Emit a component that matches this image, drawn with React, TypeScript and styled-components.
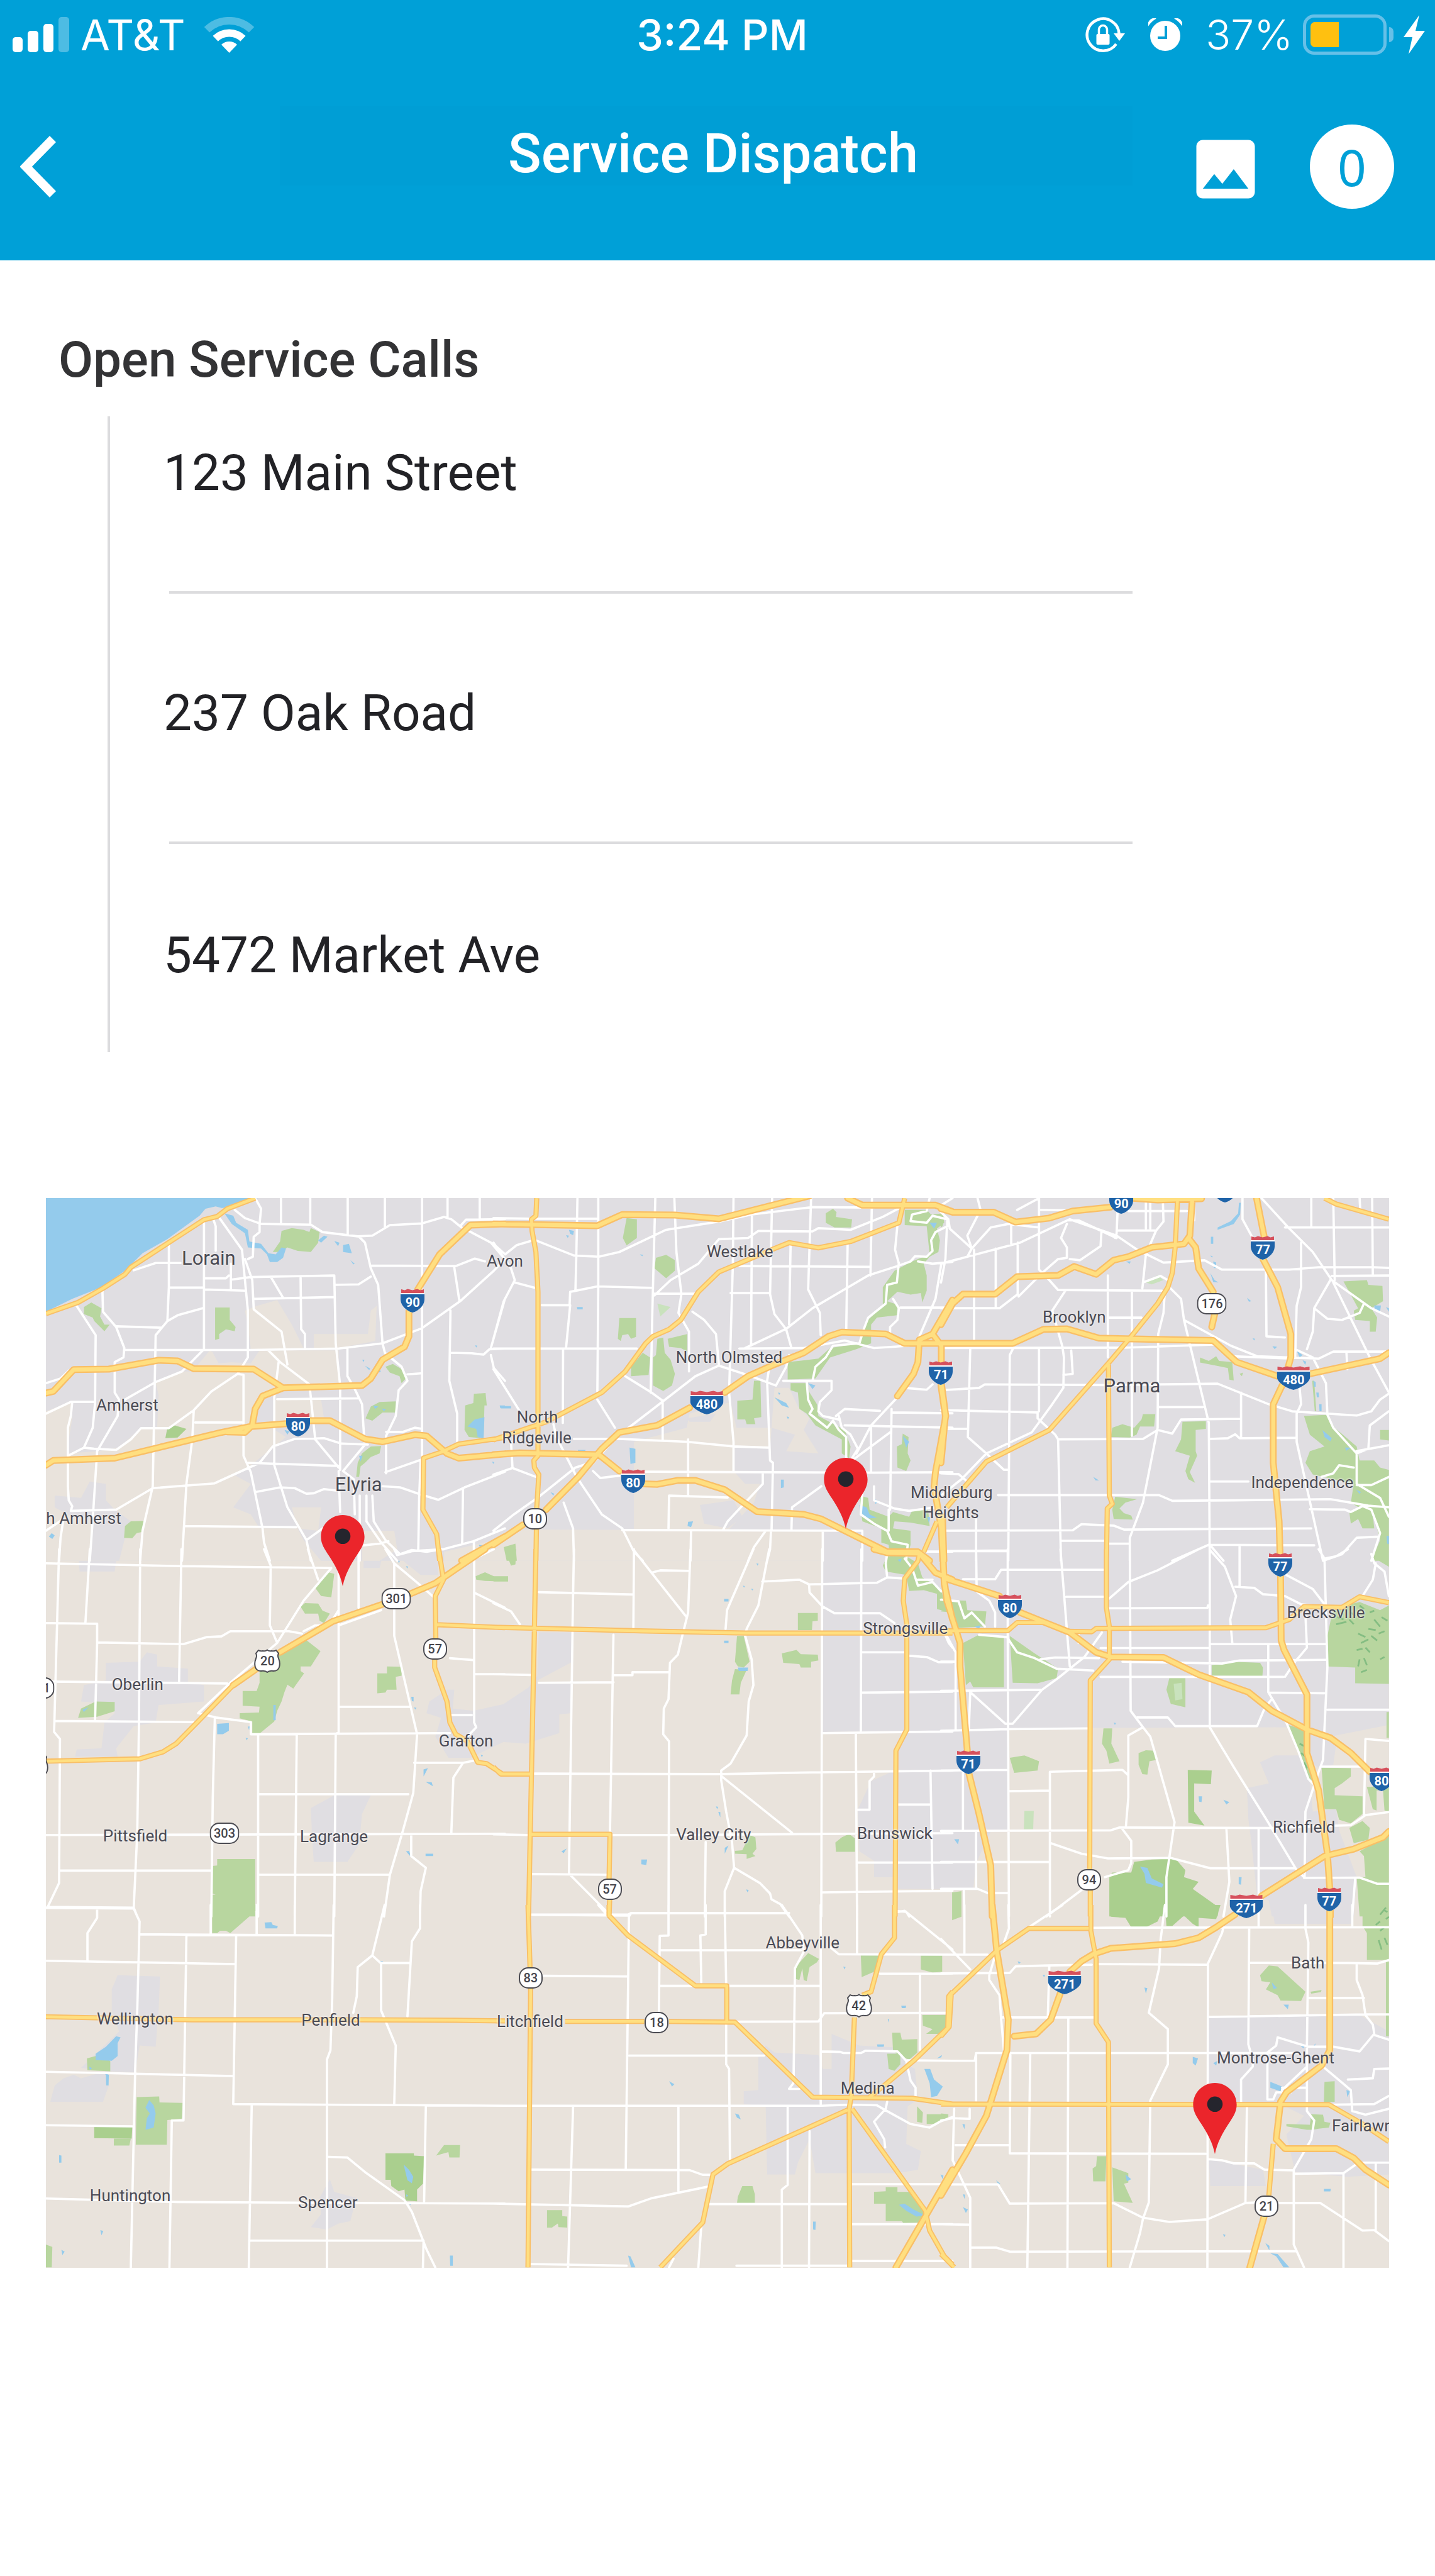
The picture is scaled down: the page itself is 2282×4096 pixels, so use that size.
import React from "react";
import styled, { createGlobalStyle, css } from "styled-components";
import { MdImage } from "react-icons/md";

const colors = {
  brand: "#00a0d7",
  brandDeep: "#009ed5",
  ink: "#222226",
  heading: "#333335",
  rule: "#dcdcde",
  land: "#e9e3dc",
  urban: "#e0dee2",
  park: "#b8d69f",
  forest: "#aacf8e",
  meadow: "#c9e2bd",
  water: "#94cbec",
  roadEdge: "#f9bf66",
  road: "#ffdf80",
  label: "#4b4b55",
};

const GlobalStyle = createGlobalStyle`
  *, *::before, *::after { box-sizing: border-box; }
  body { margin: 0; background: #fff; font-family: Roboto, "Liberation Sans", sans-serif; }
  button { font: inherit; color: inherit; background: none; border: 0; padding: 0; cursor: pointer; }
`;

const Page = styled.div`
  min-height: 100vh;
  background: #fff;
`;

const Header = styled.header`
  background: ${colors.brand};
  color: #fff;
`;

const StatusBar = styled.div`
  display: grid;
  grid-template-columns: 996fr auto 985fr;
  align-items: center;
  height: 108px;
  padding: 2px 16px 0 20px;
  font-family: Inter, "Liberation Sans", sans-serif;
  font-size: 66px;
  line-height: 84px;
`;

const StatusGroup = styled.div<{ $end?: boolean; $gap: number }>`
  display: flex;
  align-items: center;
  gap: ${(p) => p.$gap}px;
  justify-content: ${(p) => (p.$end ? "flex-end" : "flex-start")};
  font-weight: 300;
  svg { flex: none; display: block; }
`;

const Carrier = styled.span`
  font-size: 68px;
  font-weight: 400;
  padding-right: 12px;
`;

const Clock = styled.time`
  font-size: 68px;
  font-weight: 500;
`;

const PowerGroup = styled.div`
  display: flex;
  align-items: center;
  gap: 16px;
`;

const BatteryShell = styled.span`
  display: flex;
  width: 133px;
  height: 64px;
  padding: 7px;
  border: 5px solid #66c0e8;
  border-radius: 18px;
`;

const BatteryCharge = styled.span`
  width: 45px;
  background: #ffc010;
  border-radius: 7px 0 0 7px;
`;

const BatteryRow = styled.span`
  display: flex;
  align-items: center;
  gap: 4px;
  &::after {
    content: "";
    width: 7px;
    height: 24px;
    background: #66c0e8;
    border-radius: 0 7px 7px 0;
  }
`;

const NavBar = styled.nav`
  display: grid;
  grid-template-columns: 445px 1fr 481px;
  align-items: center;
  height: 306px;
  padding-top: 8px;
`;

const Title = styled.h1`
  align-self: start;
  margin: 53px 0 0;
  padding: 24px 0 0 22px;
  background: ${colors.brandDeep};
  font-size: 87px;
  line-height: 102px;
  font-weight: 500;
  text-align: center;
`;

const BackButton = styled.button`
  justify-self: start;
  padding-left: 32px;
  svg { display: block; }
`;

const NavActions = styled.div`
  display: flex;
  align-items: center;
  justify-content: flex-end;
  gap: 72px;
  padding-right: 65px;
`;

const ImageButton = styled.button`
  margin-top: 8px;
  font-size: 124px;
  svg { display: block; }
`;

const CountButton = styled.button`
  width: 134px;
  height: 134px;
  border-radius: 50%;
  background: #fff;
  color: ${colors.brand};
  font-family: "Noto Sans", sans-serif;
  font-size: 80px;
  line-height: 134px;
`;

const Main = styled.main`
  padding: 102px 73px 0;
`;

const SectionTitle = styled.h2`
  margin: 0 0 0 20px;
  color: ${colors.heading};
  font-size: 80px;
  line-height: 112px;
  font-weight: 500;
`;

const CallList = styled.ul`
  list-style: none;
  margin: 34px 408px 0 98px;
  padding: 0 0 0 84px;
  border-left: 4px solid ${colors.rule};
`;

const rowPadding = {
  first: "42px 0 140px",
  middle: "142px 0 156px",
  last: "129px 0 106px",
};

const CallRow = styled.li<{ $place: keyof typeof rowPadding }>`
  padding: ${(p) => rowPadding[p.$place]};
  color: ${colors.ink};
  font-size: 80px;
  line-height: 96px;
  margin-left: 10px;
  text-indent: -9px;
  ${(p) => p.$place !== "last" && css`border-bottom: 4px solid ${colors.rule};`}
`;

const MapFrame = styled.section`
  position: relative;
  overflow: hidden;
  margin-top: 232px;
  aspect-ratio: 2341 / 1864;
  background: ${colors.land};
`;

const MapDrawing = styled.svg`
  display: block;
  width: 100%;
  height: 100%;
`;

const MapSpot = styled.span`
  position: absolute;
  transform: translate(-50%, -50%);
`;

const PlaceName = styled(MapSpot)<{ $large?: boolean }>`
  color: ${colors.label};
  font-size: ${(p) => (p.$large ? 31 : 26)}px;
  line-height: 34px;
  white-space: nowrap;
  text-shadow: 0 0 3px #f4f2f0, 0 0 3px #f4f2f0;
`;

const Shield = styled(MapSpot)<{ $kind: ShieldKind; $wide: boolean }>`
  display: grid;
  place-items: center;
  width: ${(p) => (p.$kind === "us" ? 42 : p.$wide ? (p.$kind === "state" ? 47 : 53) : 38)}px;
  height: ${(p) => (p.$kind === "state" ? 34 : 38)}px;
  font-size: 20px;
  line-height: 24px;
  color: ${(p) => (p.$kind === "interstate" ? "#fff" : "#44444c")};
  font-weight: ${(p) => (p.$kind === "interstate" ? 700 : 500)};
  ${(p) => p.$kind === "interstate" && css`padding-top: 6px;`}
  svg { position: absolute; inset: 0; width: 100%; height: 100%; }
  span { position: relative; }
`;

const Pin = styled.button`
  position: absolute;
  width: 70px;
  height: 113px;
  transform: translate(-50%, -100%);
  svg { display: block; width: 100%; height: 100%; }
`;

/* ---- Map data ----
   The area is surveyed on nine sheets, A B C / D E F / G H I.
   Points are in sheet units and get projected onto the 2341 x 1864 map. */

type SheetId = "A" | "B" | "C" | "D" | "E" | "F" | "G" | "H" | "I";
type ShieldKind = "interstate" | "us" | "state";

const MAP_W = 2341;
const MAP_H = 1864;
const SHEET_IDS: SheetId[] = ["A", "B", "C", "D", "E", "F", "G", "H", "I"];

const project = (id: SheetId, x: number, y: number): [number, number] => {
  const i = SHEET_IDS.indexOf(id);
  return [(i % 3) * 780 + (x * 800) / 1568, Math.floor(i / 3) * 620 - 8 + (y * 640) / 1568];
};

const toPath = (id: SheetId, data: string, close = false) =>
  data
    .trim()
    .split("|")
    .map((shape) => {
      const pts = shape.trim().split(/\s+/).map((p) => {
        const [x, y] = p.split(",").map(Number);
        return project(id, x, y).map((n) => n.toFixed(1)).join(" ");
      });
      return "M" + pts.join("L") + (close ? "Z" : "");
    })
    .join("");

interface Sheet {
  urban?: string;
  field?: string;
  town?: string;
  park: string;
  forest?: string;
  meadow?: string;
  water: string;
  streets: string;
  major: string;
  highway?: string;
}

const sheets: Record<SheetId, Sheet> = {
  A: {
    urban: "0,0 1568,0 1568,1568 0,1568",
    field:
      "0,930 85,890 90,960 70,1110 180,1100 250,1085 325,1000 380,1000 385,860 375,810 460,760 500,760 560,670 620,720 700,725 730,670 1000,670 1000,820 810,820 730,870 700,990 770,1000 820,1040 780,1080 700,1160 640,1200 700,1240 640,1340 700,1370 730,1430 860,1430 880,1480 940,1568 0,1568|680,500 720,480 790,455 840,560 880,660 700,665 690,560|915,600 1100,600 1110,500 1130,480 1125,630 1000,660 915,660|780,880 940,880 950,960 900,980 780,990|840,1340 940,1340 930,1440 860,1430|1080,1440 1190,1440 1200,1520 1140,1568 1080,1568|1360,1530 1568,1470 1568,1568 1360,1568",
    town: "150,1230 205,1240 205,1310 235,1350 290,1400 270,1470 250,1568 150,1568 160,1390 90,1380 30,1340 30,1290 120,1300|570,680 660,680 640,720 590,725",
    park: "155,465 190,490 185,525 200,560 218,560 200,588 165,545 160,530 130,515 130,485|578,487 628,487 628,540 648,570 645,588 615,580 592,600 592,620 578,625|805,160 840,148 880,155 900,165 905,148 935,165 930,210 905,250 860,245 825,230 800,250 775,250 800,205|1160,740 1185,728 1215,750 1230,790 1215,810 1208,780 1175,765|1092,960 1110,910 1140,890 1195,888 1195,935 1150,935 1115,970|1432,905 1460,895 1462,855 1502,852 1506,905 1498,905 1495,1045 1445,1040 1430,1010|1110,1080 1145,1078 1140,1110 1110,1125 1090,1150 1075,1165 1070,1210 1060,1210 1065,1150 1080,1110|267,1470 270,1420 290,1400 340,1398 330,1445 310,1450 295,1472",
    forest: "408,1045 415,1000 440,990 480,1005 450,1042",
    water:
      "0,0 725,0 725,19 640,60 600,62 580,55 545,65 525,95 415,195 330,255 270,330 190,400 90,450 0,505|610,85 640,95 650,125 690,155 695,205 735,215 760,255 785,260 805,230 820,235 810,275 790,293 765,293 755,260 735,235 690,230 680,170 635,130|1015,220 1035,215 1045,255 1015,250|930,200 950,180 962,185 940,210|985,203 1003,210 998,225|1040,285 1055,300 1050,303|1440,995 1465,965 1498,955 1495,1045 1475,1040 1470,1005|10,1465 20,1450 30,1460 22,1475|815,1010 832,1015 825,1030|1550,905 1568,905 1568,918 1552,916|1118,905 1135,910 1125,920|1080,710 1088,710 1086,720|1090,735 1108,748 1104,754|1130,755 1145,757 1140,764|1148,918 1162,922 1154,930|1466,648 1474,650 1470,658|1070,1120 1082,1120 1075,1145|1524,1145 1532,1147 1528,1155|1478,1500 1492,1502 1484,1512",
    streets:
      "645,70 680,105 735,130 905,133 945,165 1065,183 1115,180 1175,135 1285,128 1360,100 1385,110 1420,145|715,20 735,65 730,130 730,165 710,185 707,270 690,280|803,20 803,130|903,20 903,133|1031,20 1031,178|1158,20 1158,145|1285,20 1285,1120|1372,20 1372,105|1482,20 1482,108|1415,140 1435,112 1568,110|1070,185 1090,210 1110,320 1135,390 1150,640 1158,680 1215,740 1235,800 1205,840 1195,950 1162,1035 1162,1195|1110,308 1400,310 1465,278 1500,290|1395,315 1412,455|1445,160 1520,210 1568,280 1530,330 1415,460 1285,575 1150,640 1000,662 700,668 270,668|300,328 375,297 420,297 460,297|420,205 420,400 415,545 375,605 365,1250 330,1440 322,1568|540,125 540,665 465,760 375,805 270,880|572,110 580,140 580,245|590,100 670,240 690,500 690,700 655,770 565,845 505,925 500,1050 480,1240 465,1568|540,362 615,362 625,350|632,368 700,357 985,350 990,640 1005,820 1005,1180|540,410 680,415|632,300 632,410|680,280 705,370 710,495 805,590 825,730|422,402 540,402|710,450 985,442|770,360 810,445|870,360 872,580 885,600 885,662|990,390 1068,388 1110,355|105,480 170,605 168,895 160,1000 130,1085|193,415 195,505 240,570 268,660 265,700 235,720 235,850 250,880 245,950 175,1100 160,1390 150,1568|240,567 395,573|415,545 450,520 535,490|80,755 50,790 0,810|0,940 85,890 165,890|90,890 85,950 75,1000 75,1250 78,1310 90,1335 85,1355 240,1350 365,1258 575,1238 730,1150 775,1080 850,1048 950,1045 1010,1068 1100,1072|75,1120 130,1085 165,1090 240,1095 290,1050 325,1002 420,1002 500,930|510,978 675,978|655,770 675,775 675,1120 700,1190 740,1430 745,1490 765,1568|760,670 800,720 900,815 905,870 920,1050 1000,1170|795,720 780,870 780,1160 825,1340 890,1480 905,1568|790,878 1065,875|1030,660 1030,780 1055,835 1080,900 1088,1060|690,1150 1000,1163|1015,1185 1090,1072|715,1275 800,1255 850,1258 890,1282 915,1280 950,1262 990,1268|1160,1190 1285,1135|1150,1250 1210,1255 1275,1283 1340,1308 1430,1255 1568,1188|1000,1185 1005,1360|1015,1185 1052,1220 1055,1370|1072,1290 1072,1568|1095,1290 1095,1400 1145,1490 1200,1568|1115,1290 1120,1400 1160,1480 1210,1540 1250,1522 1300,1530 1360,1518 1460,1485 1568,1430|1085,1502 1140,1495 1170,1485|1280,1140 1275,1300 1272,1520|1425,1260 1422,1495|1162,1018 1220,1018 1260,1000 1285,1005|1235,772 1280,768|1382,500 1378,800 1405,940 1405,1060|1380,680 1455,682 1495,688 1515,665 1568,662|1520,690 1530,745 1568,800|1568,450 1520,660|475,1420 855,1425|890,1480 945,1430|0,1440 60,1390 50,1470 45,1568|1462,1485 1462,1568",
    major:
      "0,513 110,465 195,405 270,345 290,315 425,205 540,112 585,98 620,65 715,20|1568,1042 1410,1070 1350,1105 1290,1130 1288,1350 1335,1455 1345,1568",
    highway:
      "0,852 25,845 95,752 215,750 385,712 450,715 505,748 710,750 810,830 1080,820 1110,790 1150,710 1225,655 1240,610 1240,500|1270,410 1345,260 1450,135 1568,130|810,830 740,865 715,920 705,990 680,1020 620,1018|0,1160 25,1140 235,1130 600,1020 700,995 820,983|900,970 970,970 1090,1048 1150,1060 1260,1030 1300,1035 1370,1110 1410,1130 1568,1112|1568,1465 1420,1568",
  },
  B: {
    urban: "0,0 1568,0 1568,1568 0,1568",
    field:
      "480,1060 660,1000 670,940 810,890 830,1000 950,1000 945,1085 820,1085 820,1185 860,1240 910,1240 890,1320 800,1440 480,1440|960,830 1010,830 1040,910 1080,960 1060,1010 1110,1110 1000,1100 1030,1030 950,1000|0,1500 100,1435 1125,1440 1125,1568 0,1568",
    town: "705,1330 820,1310 850,1380 800,1430 720,1410|660,960 760,940 740,975 670,975",
    park: "455,105 490,110 490,190 455,222 442,190|555,275 590,262 620,285 620,330 590,362 550,320|430,532 487,532 487,612 470,620 460,600 440,605 435,630 425,620|560,620 580,615 585,680 605,710 620,770 610,820 580,843 545,820 545,700 555,690|595,620 662,600 662,675 640,660 600,655|510,680 535,700 530,775 470,780 470,740|890,800 912,800 915,955 890,960 895,985 865,985 860,965 833,965 833,885 885,880|1160,65 1172,80 1170,100 1225,110 1222,145 1165,145 1135,125 1135,85|1405,70 1480,70 1495,90 1535,85 1540,125 1515,150 1525,200 1520,250 1490,270 1470,300 1480,350 1480,415 1465,465 1460,425 1425,432 1380,420 1345,460 1380,475 1380,520 1310,530 1290,560 1290,640 1240,665 1150,700 1100,790 1005,795 1005,720 1110,705 1150,660 1250,640 1280,540 1330,480 1330,400 1370,330 1430,290 1490,260 1480,140 1405,135|1015,810 1070,810 1080,850 1105,900 1110,950 1200,1010 1220,1080 1215,1130 1190,1110 1190,1050 1100,990 1070,940 1045,920 1040,850 1015,840|1398,1025 1418,1040 1415,1110 1425,1140 1410,1185 1380,1170 1378,1080 1395,1070|1250,1290 1280,1300 1285,1350 1350,1380 1365,1360 1420,1380 1430,1355 1485,1350 1490,1420 1425,1405 1370,1400 1365,1430 1425,1440 1425,1500 1410,1568 1355,1568 1350,1500 1325,1490 1325,1430 1260,1400|35,1510 75,1495 80,1568 45,1568",
    meadow: "560,470 605,485 570,525",
    water:
      "465,1085 485,1090 485,1150 468,1155|25,906 60,908 60,918 25,918|285,485 305,485 305,495 287,495|258,155 275,160 272,178 262,172|248,178 258,180 254,190|500,260 512,262 508,268|982,1222 992,1222 992,1255 982,1258|665,1402 682,1400 675,1425 663,1420|1250,1330 1275,1340 1285,1370 1310,1385 1280,1388 1255,1365|1303,1305 1318,1315 1305,1325|288,1095 315,1095 312,1104 290,1104|960,870 1000,895 1010,915 985,905|1075,810 1100,820 1090,835|1398,1035 1420,1060 1410,1085|1490,125 1515,125 1505,150|195,1275 208,1282 204,1290|1482,1380 1492,1382 1488,1410|972,850 980,852 976,860|1002,952 1010,955 1006,964",
    streets:
      "287,20 283,270 280,415|358,20 358,400 355,850|553,20 543,500 537,850|618,20 625,250 642,430 632,510 668,590 668,760|820,20 818,300 805,850|952,20 945,430 960,515 1000,580 1018,660|1085,20 1075,410 1115,510 1118,605|1293,20 1288,350|0,105 125,108 355,108|0,215 40,260 80,220 140,198 275,265 360,270 430,250 590,155 770,120 880,90 1090,58 1290,60 1400,45|550,435 605,370 700,300 770,195 870,190 905,160 1090,162 1110,148 1220,155 1330,100 1390,60|0,210 60,320 73,370 35,460 0,620|73,380 140,402|165,477 260,477 262,420 355,397 545,403|262,477 248,660|238,665 237,980|0,662 490,662|545,428 690,428|680,505 720,540 760,600 770,730|883,95 880,650|1015,220 1010,560|1210,215 1205,590|1380,135 1372,240 1385,300|840,310 1285,313|810,425 942,425|860,660 1000,578 1090,490 1280,350 1380,310 1425,290 1440,268 1480,270 1500,245 1495,200 1510,165 1550,140 1550,110 1500,95 1480,125 1425,118 1430,90 1480,75 1490,20|1385,295 1378,380 1345,390 1340,470 1280,530 1265,580 1250,640 1160,650 1135,700 1100,740 1090,800 1070,800 1075,880 1090,920 1080,940 1140,1000 1160,970 1180,1010 1205,1040 1205,1130|1450,290 1500,300 1568,292|1390,487 1568,487|1365,450 1385,490 1380,540 1355,570 1355,620|1530,300 1510,450 1450,625|1568,20 1530,50|770,735 690,780 540,925 420,1040 290,1220 180,1350 0,1510|840,662 1060,660 1200,628 1300,660 1420,650|770,735 880,780 965,820 1000,740 1010,690|945,720 935,800 945,1140 955,1150 950,1440|805,850 820,1060 820,1185|450,780 540,850 578,885 578,1055|355,880 415,1000|275,1048 430,1048 660,1060 820,1080 942,1085|665,1050 665,1290|520,1188 1300,1192 1568,1190|598,1430 600,1290 800,1298|920,1195 920,1240 800,1400 785,1435|440,1437 1260,1440|1018,1435 1020,1340 1120,1250|205,985 215,1040 280,1200 300,1240 370,1370 440,1430 480,1530 510,1568|240,1320 272,1430 275,1568|340,1185 365,1215 430,1205|0,1200 65,1172 145,1210|60,1060 65,1170|675,1440 673,1568|930,1440 890,1510 870,1568|948,1440 945,1520 935,1568|1125,1440 1125,1568|990,800 1155,800 1155,840 1115,890 1110,930 1125,950 1180,965|1170,950 1200,920 1320,928|1200,990 1568,1000|1180,950 1190,1000 1220,1030 1245,1090 1220,1140|1380,870 1290,990 1240,1110|1355,1020 1225,1140|1290,1000 1290,1190|1360,920 1355,1350|1405,830 1480,838 1500,815|1360,935 1568,938|1260,1280 1255,1370 1300,1410 1345,1440 1360,1485 1415,1500 1410,1568|1300,1250 1300,1310 1370,1345 1420,1355 1510,1340|1350,1350 1350,1440|1260,1440 1260,1568|0,750 50,850 90,930|0,1440 70,1370 150,1300 280,1170 330,1150",
    major:
      "148,20 145,95 130,110 132,160 145,250 152,420 152,1120 138,1140 140,1170 155,1200 148,1340 145,1568|0,1052 180,975 370,850 450,760 520,640 545,610 600,580 640,540 700,420 770,335 960,235 1010,210 1110,232 1220,205 1385,125 1405,20|1515,1400 1470,1530",
    highway:
      "0,130 355,138 440,90 620,92 770,108 1080,10|1210,20 1260,50 1510,50 1568,78|1568,455 1500,600 1455,625 1450,720 1435,770 1380,865|1500,600 1530,650 1530,720|1568,640 1405,640 1340,600 1190,592 1145,610 1060,680 960,730 870,780 790,850|670,915 560,990 430,1020 370,1090 290,1210 180,1350|100,1415 0,1500|0,1115 90,1108 360,1115 430,1185|515,1240 560,1242 630,1225 690,1225 790,1265 900,1358 1060,1370 1120,1390 1345,1530 1450,1530 1490,1568|1530,810 1545,950 1510,1190 1505,1250 1530,1430 1535,1568",
  },
  C: {
    urban: "0,0 1568,0 1568,1568 0,1568",
    park: "885,700 915,715 940,695 950,715 995,720 1000,798 985,795 980,745 940,735 885,722|1375,375 1455,370 1460,390 1508,395 1510,460 1470,490 1490,530 1485,590 1465,590 1465,545 1415,540 1410,500 1425,490|585,1000 620,985 660,1000 685,965 690,942 732,942 728,995 680,995 668,1030 645,1042 580,1040|825,975 905,972 905,1005 870,1010 870,1100 875,1120 850,1190 868,1235 845,1220 835,1185 850,1120 800,1100 820,1050|1240,950 1320,945 1345,1000 1420,1080 1430,1140 1480,1140 1500,1170 1530,1180 1530,1568 1470,1568 1500,1480 1480,1380 1440,1350 1400,1320 1410,1240 1270,1200 1245,1150 1260,1100 1310,1080 1260,1030|1395,1360 1440,1340 1475,1370 1480,1430 1440,1430 1425,1390 1400,1410|1500,1010 1530,1010 1530,1055 1500,1050|595,1295 670,1305 630,1320 610,1345 625,1365 650,1375 655,1392 590,1390 585,1350|1268,800 1275,800 1282,930 1277,930|1020,770 1032,765 1028,780|0,120 10,120 5,140 0,145",
    meadow: "700,380 740,350 760,370 720,388",
    water:
      "1018,40 1024,40 1022,90 1000,130 945,155 945,145 990,118 1015,85|922,185 930,185 930,215 922,215|920,340 935,370 948,380 930,378|1480,478 1503,478 1500,505 1482,500|1303,1010 1335,1045 1330,1058 1310,1040|632,290 648,290 645,300|520,1210 540,1225 528,1225|1215,670 1235,690 1225,700|1235,712 1248,718 1244,732|1282,850 1290,850 1291,870 1284,870|1292,900 1300,900 1300,930 1293,930|1272,800 1280,805 1280,825 1274,825|930,290 940,295 940,318 932,318|920,265 928,267 926,274|1045,445 1060,460 1052,462|1132,652 1148,655 1140,665|1064,618 1073,620 1070,628|1380,1085 1400,1085 1385,1098|1418,1265 1435,1275 1430,1282|1522,1462 1530,1462 1530,1497 1524,1495|1520,485 1530,490 1530,505",
    streets:
      "125,20 135,70 90,180 105,235 90,270|260,70 335,20|335,20 335,325 370,370 400,412 755,415|0,80 25,110 30,150 105,235|20,150 15,280 0,380|0,300 90,270 270,210 440,110 600,180 670,240 760,295 900,285 960,325 1190,325 1290,315 1480,315 1530,318|435,115 470,115 600,190|105,235 170,145 230,130 335,145|113,240 113,625|262,210 262,430 200,490 0,490|187,235 187,490|240,130 240,215|430,130 410,190 430,230 430,275 400,280 345,340 265,440|440,280 475,285 545,225 548,165|603,80 600,170 595,190|605,158 735,158|758,30 760,120 735,158 700,260 688,405|700,25 700,150|715,25 715,150|690,380 750,352 775,370|640,75 840,75|865,20 865,115|340,70 440,72|570,350 570,700|425,415 380,500 415,655 420,700 418,830 380,900 310,1020 155,1110 70,1220 0,1290|445,670 450,770 418,775|652,415 652,1035|570,530 685,530|0,660 640,658 930,645|765,410 760,510 742,600 740,1000 690,1320 645,1470 645,1568|780,400 820,450 830,540 915,980 918,1568|830,540 990,650 1080,695 1290,705 1340,675 1530,675|1000,695 1200,705|1030,20 1030,110 1065,190|1095,20 1190,150 1270,250 1335,370 1470,490 1530,525|1175,145 1530,145|1230,210 1230,400 1215,480 1210,700|1265,20 1265,145|1340,20 1345,370|1430,20 1432,65|1473,20 1475,345|1110,330 1112,610 1175,615|1335,352 1530,350|1330,370 1275,490 1270,590 1250,665|1340,380 1465,700 1530,850|1275,490 1320,535 1370,540 1430,510 1445,470|1210,665 1270,700 1315,810 1320,945 1340,1000 1420,1110 1420,1240 1500,1300 1530,1380|1420,1110 1460,1090 1465,990 1530,930|1420,1100 1530,1075|1420,1245 1470,1245 1530,1210|1385,675 1388,750|1225,830 1230,900 1215,940 1215,1060 1305,1568|0,840 130,830 150,815 575,818 945,812 1120,900 1200,930 1420,948 1470,930 1500,880 1530,855|0,925 330,935 330,960 390,1030 400,1050 410,1568|335,665 335,930|245,665 235,690 230,1568|100,660 92,1040 155,1110 215,1180 230,1180|20,1005 90,1005|400,1050 690,1048 740,1010 790,1025 820,965 1025,962|740,912 895,912|1025,850 1025,1045|920,1048 980,1045 1005,1028 1020,1045 1215,1043|0,1195 60,1198 85,1225|195,1288 745,1288 790,1312 1000,1310 1330,1305 1460,1333 1530,1340|920,1230 1050,1230|0,1440 450,1438 480,1412 590,1418 625,1435 1265,1430|410,1483 560,1483|570,1495 645,1495|0,1527 225,1527|790,1568 915,1500 1275,1502|1260,1348 1380,1350 1400,1360 1440,1335 1470,1350 1500,1450 1490,1490 1470,1568|1300,1210 1340,1195 1360,1160 1410,1170|1305,1568 1370,1540 1420,1470 1495,1465|120,1390 120,1568|1020,1505 1020,1568|918,1500 965,1568",
    major:
      "808,30 800,230 790,340 775,400 740,470 650,610 575,720 370,1010 155,1145 20,1340|572,720 575,1290 585,1325 568,1345 565,1568|1310,20 1350,45 1530,110",
    highway:
      "0,65 40,80 180,80 255,122 370,105 450,75 580,58|655,20 740,28 890,22|858,30 850,180 830,215 720,230 640,270 590,285 530,345 455,312 400,350 260,355 185,430 75,430 40,470 0,560|0,640 245,640 350,580 430,578 540,618 930,628 1010,720 1150,780|1260,770 1500,705 1530,680|1078,20 1105,190|1100,280 1150,400 1195,600 1195,700 1185,745|1165,820 1135,900 1135,1150 1155,1400 1158,1535|0,820 15,950 0,1150|5,1380 10,1568|845,190 870,230 880,320 930,420|935,515 925,570",
  },
  D: {
    urban:
      "110,0 255,0 240,50 235,95 115,95|205,485 320,480 345,440 380,450 380,500 485,510 485,565 540,580 540,650 385,665 375,740 300,755 240,850 245,885 100,885 105,855 190,850 200,740 235,700 230,660 120,650 130,580 205,560|905,1105 985,1050 1110,1050 1080,1130 1070,1260 1030,1335 915,1335 910,1250|1085,0 1155,0 1140,80 1085,80|1180,0 1340,0 1340,110 1280,110 1230,60|1310,650 1370,600 1395,600 1390,680 1460,690 1568,660 1568,820 1450,890 1375,890 1330,800 1350,720 1300,700",
    park: "965,98 985,105 975,205 940,200 920,165 945,120|870,245 885,230 930,232 945,262 970,275 950,315 935,305 930,275 885,275|730,520 800,430 890,388 938,435 905,500 870,500 870,520 882,530 845,595 825,578 815,610 805,650 790,690 780,735 730,787 705,785 705,735 662,722 662,700 728,697 730,672 672,668 672,605 720,605 730,570|1132,530 1165,530 1165,500 1215,502 1215,540 1195,545 1198,600 1165,600 1160,612 1132,615|110,720 120,680 170,650 235,652 235,692 175,715|1468,115 1500,98 1530,115 1568,115 1568,138 1500,135 1470,130|585,1323 715,1323 715,1568 568,1568 568,1475 580,1475 568,1470 568,1352 585,1350",
    water:
      "585,745 625,742 625,775 605,790 585,790|125,685 145,675 130,695|777,665 785,665 785,730 777,730|1290,940 1305,935 1290,970|1297,993 1318,995 1322,1012|1297,1300 1323,1300 1323,1310 1297,1310|1248,630 1256,630 1256,650 1250,648|1257,675 1266,677 1262,684|690,757 696,757 694,772|682,805 690,807 686,816|1230,1290 1240,1288 1250,1318|1202,48 1209,50 1206,60|1230,72 1238,74 1234,82|1485,877 1493,880 1489,888",
    streets:
      "0,60 465,72 975,80|45,0 28,780 48,810 45,1425 5,1530|150,0 135,312|322,0 318,740 312,1210 300,1530 312,1568|463,0 455,565|0,315 175,318 175,400 168,730|175,398 470,405 550,375 600,372 630,350 830,350 875,360|20,565 620,573|30,733 505,738|745,0 768,70 765,325 790,400|895,0 930,130|975,80 880,220 790,400 630,570 520,700|1000,0 1000,780 990,790 985,1568|1068,0 1068,250|1190,60 1190,370 1268,790 1255,1040 1220,1200 1175,1390 1155,1568|1160,0 1190,60 1280,155 1330,210|1190,0 1200,25 1250,8 1360,0|1000,325 1145,260|1000,673 1245,673|1380,465 1460,473|1530,0 1463,40 1463,740 1470,760 1440,800|1463,185 1568,250|1463,533 1568,533|1380,708 1455,708|520,700 580,718 700,738 700,790 1380,785|577,720 570,1060 565,1568|725,790 725,1568|857,790 850,1568|728,1046 1238,1046|0,1220 1568,1215|1258,912 1425,912 1460,903|1425,912 1392,975 1385,1210|50,1372 565,1372|725,1390 1175,1390|1248,1222 1248,1310 1298,1360 1280,1460 1278,1568|5,1527 300,1530|175,1530 175,1568|880,350 920,325 940,325|1000,260 980,300",
    major:
      "0,905 320,895 400,865 445,830 520,735 640,580 720,510|1342,0 1358,130 1330,200 1332,385|1328,465 1328,505 1370,650 1380,740 1400,790 1440,820 1475,910 1505,915 1560,960 1568,960|1335,322 1568,335",
    highway: "640,580 720,510|800,440 980,308 1150,235|1245,190 1330,145 1400,85 1500,0",
  },
  E: {
    urban:
      "1125,0 1568,0 1568,1450 1380,1450 1375,1400 1300,1400 1300,1330 1250,1290 1245,1110 1290,990 1370,945 1370,860 1405,775 1125,780|155,355 270,355 270,480 150,560 150,575 265,575 265,700 225,705 225,785 110,830 0,820 0,690 120,590 150,540",
    park: "38,0 78,0 75,65 60,70|0,115 50,115 50,138 0,138|1040,272 1108,272 1108,305 1090,308 1088,345 1040,345|985,445 1035,430 1050,448 1108,450 1110,475 1085,480 1085,505 1050,505 1045,490 990,485|832,370 855,370 875,480 855,505 835,500 825,480|825,512 865,515 845,570 840,620 810,620 815,560|875,1220 895,1230 898,1280 885,1300 895,1310 865,1322 865,1302 825,1300 825,1288 850,1285|1168,1252 1190,1230 1215,1215 1235,1235 1235,1292 1170,1292|1345,30 1410,30 1450,60 1465,120 1530,170 1545,265 1515,255 1515,190 1470,175 1420,178 1410,110 1340,95 1330,70",
    water:
      "835,505 870,505 868,520 838,520|788,212 803,212 803,223 788,223|788,390 803,390 803,400 788,400|505,1325 525,1325 522,1348 505,1345|768,1122 775,1122 775,1145|760,1098 768,1100 764,1110|232,1290 250,1278 240,1298|790,1275 803,1265 790,1300|863,1452 872,1455 868,1465|1380,45 1395,40 1390,55|852,155 859,157 856,164|880,168 888,170 884,176|898,60 906,62 902,70",
    streets:
      "0,230 60,265 90,320|275,0 270,330|480,0 478,335|155,183 478,193|480,5 660,290|673,0 665,270 645,370 630,450 603,485 598,640 582,680 580,790 600,820 598,1568|545,98 570,90 668,92|888,0 798,260 793,340|942,0 905,240 865,340 860,370 882,470 888,580 872,650 865,795 840,850 810,915 778,945 778,985 795,1120 815,1250 822,1360 790,1460 790,1568|918,138 1045,130 1078,150 1310,143 1345,120 1400,125|1078,150 1080,185 1125,245 1165,273 1320,273 1370,315|1123,0 1120,1568|1257,0 1255,775|1260,440 1410,440|1420,455 1480,460 1520,482 1568,482|1260,612 1568,608|1125,785 1568,778|0,533 128,537|270,355 258,1385 385,1545|155,570 410,568|410,365 398,1210|412,538 475,538 475,525 600,525|140,958 780,960 1120,952 1568,945|780,970 1020,1210|1238,785 1242,1568|1300,955 1300,970 1285,990 1285,1112 1245,1112|1493,945 1500,1450|1382,1090 1490,1090|0,1217 115,1220|400,1220 600,1220 1568,1212|1245,1338 1568,1338|1125,1465 1568,1458|725,1250 722,1568|822,1360 910,1425 945,1470 950,1495 980,1515 1010,1568|130,1387 385,1390|130,1560 460,1560 470,1553 1010,1553|1380,1545 1410,1548 1420,1568|1345,20 1340,60 1345,120|1405,40 1430,80 1450,155 1500,140 1530,180|1545,370 1555,400 1568,420|1450,130 1500,130|1480,10 1568,10",
    major:
      "0,930 25,960 130,960|125,1217 398,1217 395,1410|397,1495 395,1568|1455,18 1450,50 1405,125 1400,220 1412,320 1412,770 1375,860 1372,1568|145,0 140,340 120,1568|0,333 480,348 860,358 1568,358",
    highway: "1300,0 1345,15 1455,18 1470,40 1510,100 1568,130|1535,0 1540,150 1568,300",
  },
  F: {
    urban:
      "0,0 1530,0 1530,750 1330,800 1350,830 1340,920 1300,940 1250,900 1220,760 0,765|0,760 230,760 230,1200 170,1205 120,1340 110,1450 0,1450|1090,910 1140,880 1225,880 1260,990 1270,1120 1350,1110 1360,1200 1420,1400 1410,1568 1130,1568 1120,1500 1080,1480 1060,1250 1050,1150 1045,1020 1120,1000",
    park: "0,215 85,220 90,260 155,265 150,330 60,335 40,270 0,265|75,400 130,365 215,370 215,590 110,590 100,565 85,580|235,370 320,445 400,510 395,550 330,572 245,570|925,495 1000,480 1090,485 1100,505 1098,542 925,540|780,550 835,550 835,675 785,660 770,600|1340,250 1430,225 1500,260 1530,240 1530,575 1415,572 1415,505 1320,500 1320,370|1480,0 1530,0 1530,75 1470,30|555,765 585,765 582,830 610,905 575,915 565,860 550,830|235,890 285,880 335,905 330,945 250,955|675,870 700,858 730,860 735,900 712,905 705,962 688,960 675,920|1185,750 1240,770 1250,900 1280,1010 1265,1000 1240,940|1300,932 1400,935 1400,970 1370,1000 1345,1020 1345,1050 1440,1055 1440,1130 1400,1170 1360,1155 1350,1110 1310,1110|1395,1190 1440,1160 1465,1190 1460,1240 1410,1255|1430,1290 1530,1220 1530,1568 1430,1568 1420,1400 1450,1400 1445,1310|38,1465 70,1460 70,1568 38,1568|1455,1015 1530,1010 1530,1120 1515,1115 1510,1030 1488,1030 1488,1115 1475,1110|1522,695 1530,695 1530,805 1522,805",
    forest:
      "843,942 925,945 922,1003 865,1000 865,1120 900,1180 845,1168|585,1380 650,1380 660,1335 720,1325 800,1320 835,1370 830,1400 880,1420 860,1450 905,1490 950,1530 945,1568 575,1568 575,1400",
    meadow: "285,1117 317,1117 315,1195 283,1195|795,575 822,570 825,640 800,645",
    water:
      "680,1355 705,1360 720,1405 760,1430 755,1445 700,1425 695,1385|880,1055 892,1055 890,1080 882,1078|965,1070 985,1080 975,1090|1017,1400 1027,1400 1025,1432 1017,1430|45,1238 62,1238 58,1260|590,740 598,742 594,750|115,330 135,325 130,340",
    streets:
      "120,0 122,180 165,220 185,270 185,330|228,0 228,330 232,1568|408,0 440,500|0,8 225,5|75,128 185,128 205,88 555,88|645,0 648,690 690,760 715,800 798,1165 770,1400 770,1568|918,0 918,760 1000,930 1110,1150 1215,1370 1240,1400|880,0 740,90 640,140 575,210|920,5 970,75 1008,200 988,300 995,400|1020,0 1020,158|1005,160 1070,165 1100,192 1175,200 1230,235 1270,240|428,203 555,203|575,252 910,250 912,240|1290,0 1310,40 1320,500 1305,900 1290,950 1245,1120 1242,1400|1310,40 1350,30 1390,0|1180,110 1270,170 1310,235|1485,60 1475,130 1440,200|1470,20 1480,60 1515,95 1530,200|920,405 1315,405|545,422 915,422|1245,280 1250,420 1210,480 1175,545|545,545 1170,545|620,480 960,488 1020,475 1315,472|1118,405 1118,610 1180,740 1220,860 1255,980 1270,1000|1120,612 1310,615|1130,640 1105,680 1080,755 800,755 775,718 670,718|1320,685 1530,685|0,605 345,600 400,550 450,500 490,460 550,355|340,470 390,462 540,465|100,610 220,745 245,745 345,600|100,610 95,770|0,775 230,768 500,765|15,360 50,440 50,770|0,480 45,480|0,945 230,942|130,365 225,375 260,440 320,465 395,510 520,518|235,1033 372,1030|372,1568 372,950 620,942 640,965|690,760 640,795 640,1060 632,1180|0,1203 580,1200 610,1188 1120,1190 1400,1178 1450,1135 1530,1122|620,1195 650,1245 650,1340 640,1370 560,1400|375,1255 480,1300 570,1320 785,1318 920,1362 1210,1362|0,1335 370,1335|75,950 75,1200|120,1205 120,1450|0,1450 125,1450 160,1468 230,1468|360,1568 480,1455|975,1190 985,1420 965,1568|1085,1190 1085,1480|1240,1403 1430,1402 1490,1428 1530,1428|1415,1405 1405,1568|1300,928 1450,928|1530,818 1450,810 1445,1135|0,215 60,222 80,295 105,270 150,330|78,1455 80,1568|470,360 470,400",
    major:
      "0,348 228,348 260,313 350,313|430,350 515,352 530,338 1110,335 1190,300 1240,245 1370,248 1430,203 1530,228|565,0 565,250 575,330 575,470 510,560 508,1365|510,1450 510,1568",
    highway:
      "5,0 10,120 20,220 65,400 65,500 90,860|95,955 130,1130 170,1350 175,1568|15,125 200,200|270,270 360,315 440,355 530,440 580,460 760,462 880,535 1050,610 1130,690 1250,770 1330,805 1400,870 1465,950|1158,0 1158,15|1160,110 1162,390 1172,430 1250,620 1250,870 1290,1030 1320,1300 1328,1450|1330,1540 1330,1568|1095,1480 1310,1310 1410,1280 1510,1230 1530,1205",
  },
  G: {
    urban:
      "245,300 390,305 385,450 375,605 320,600 305,715 215,710 120,695 250,540 225,450 225,360|60,740 95,725 120,740 205,710 215,770 195,840 15,840 30,770|970,1170 985,1225 1060,1250 1040,1350 1000,1360 960,1385 905,1375 940,1320 935,1250",
    park: "582,0 717,0 717,25 630,120 615,110 595,110 585,120 568,120 568,45 582,45|140,655 170,645 220,665 220,710 142,705|310,820 387,817 388,843 467,845 465,912 415,918 413,1023 307,1023|232,997 290,997 285,1027 232,1027|1333,1070 1360,1025 1415,1025 1413,1078 1378,1078 1375,1055|0,1450 22,1460 20,1547 0,1547",
    forest:
      "165,948 295,948 293,997 165,995|1160,1060 1257,1060 1257,1070 1293,1072 1288,1190 1268,1215 1268,1265 1228,1262 1225,1215 1205,1222 1180,1200 1178,1173 1160,1173",
    water:
      "240,560 255,565 245,590 245,645 225,665 170,662 170,635 205,605|747,75 770,73 775,85 792,90 790,100 750,100|190,712 215,725 214,770 206,770 205,725|353,833 368,855 375,890 368,950 340,960 345,910 355,890 340,865|45,1068 53,1070 53,1100 45,1100|186,1388 196,1392 190,1410|53,1472 64,1480 56,1495|1222,1108 1240,1130 1255,1160 1250,1188 1235,1175|1380,1497 1390,1497 1390,1540 1381,1540|1140,240 1152,240 1148,250|148,690 158,697 150,704|1230,1235 1238,1240 1232,1247|1240,1273 1248,1275 1244,1282",
    streets:
      "0,12 300,15 320,70 312,450 305,700 290,1547|175,15 175,55 142,120 142,240|563,0 563,125|720,0 720,125|850,0 850,125|983,0 978,400 972,620 960,660 960,1547|320,125 980,130|480,130 470,920 430,920 422,1547|650,130 640,850|0,238 645,252|1157,0 1115,215 1065,265 1062,390 1050,460|1115,215 1145,250 1145,450 1195,600 1190,850|1278,0 1278,100 1250,155 1235,475|1145,248 1245,247|0,712 225,718 640,730|640,850 1568,857|0,940 295,945|703,852 693,1547|965,1075 1030,1078 1090,1140 1225,1260 1250,1310 1300,1470 1330,1547|1298,857 1292,1265|0,1253 450,1268 1568,1275|700,1433 1288,1433|1290,1433 1288,1547",
    major: "0,477 500,490 1080,490 1400,492 1568,495",
  },
  H: {
    urban:
      "855,795 905,790 905,650 930,600 960,630 1110,640 1125,700 1155,700 1155,550 1250,600 1400,610 1410,680 1440,700 1450,830 1415,860 1410,1020 1460,1050 1450,1130 1380,1145 1100,1145 1080,1000 1040,1100 1030,1150 935,1150 930,860 855,850",
    park: "1075,205 1112,230 1105,245 1080,265 1070,325 1060,320 1055,270 1045,320 1030,315 1035,260|1255,215 1320,215 1300,285 1258,308|1460,215 1533,215 1533,285 1500,288 1460,275|1465,470 1550,470 1550,530 1520,550 1478,550 1500,530 1467,515|1362,545 1390,545 1395,575 1448,572 1448,630 1420,660 1400,650 1365,625|1345,635 1390,635 1390,680 1370,708 1350,700|850,1200 885,1200 893,1235 893,1272 832,1272 835,1245|183,1303 235,1303 235,1328 252,1330 252,1377 222,1375 220,1360 200,1377 183,1377|1300,1225 1340,1222 1340,1205 1380,1205 1380,1225 1420,1225 1470,1310 1480,1355 1400,1358 1395,1350 1340,1350 1340,1275 1300,1275|1447,860 1467,885 1465,930 1447,925|1480,893 1555,893 1540,915 1510,935 1480,935",
    water:
      "1472,700 1492,700 1505,745 1535,775 1515,815 1495,820 1490,760|600,752 618,765 610,775|1393,430 1410,430 1408,440 1395,440|1310,595 1335,595 1333,605 1312,605|825,890 838,895 845,915 832,908|1385,1280 1405,1275 1435,1300 1475,1325 1445,1330 1410,1305|1092,1352 1101,1352 1100,1387 1092,1385|460,1497 468,1500 485,1547 470,1547|1527,1150 1537,1155 1535,1172|705,300 710,300 710,335|1515,655 1532,640 1530,650|1195,263 1203,265 1199,275|1347,487 1352,488 1350,502",
    streets:
      "130,42 465,45 470,35 1005,35|358,0 385,38|463,45 452,1130|598,0 598,130 568,132 565,480|725,0 725,125 707,130 710,330|790,0 795,340|795,500 795,680 805,700 808,1090|570,193 1050,193|570,345 1115,345|985,0 1055,130 1060,200 1030,270 1025,760 1010,785 1045,785|1118,0 1118,850|1242,0 1242,210|1380,30 1405,25 1568,190|1150,180 1180,210 1568,212|1320,293 1568,293|1457,293 1457,620|170,302 455,305|830,498 1110,497 1130,462 1545,460|463,643 925,643|1120,625 1185,627 1195,632 1255,632 1270,622 1380,625 1410,665 1425,750 1442,780 1442,815|1415,663 1568,665|0,857 1120,857 1220,852 1310,855 1345,880 1425,935 1490,950 1525,925 1568,905|1345,840 1340,870 1300,925 1335,1000 1338,1035|272,862 255,1547|632,862 632,1222|1005,862 1005,1195 985,1215 985,1547|1080,965 1078,1547|130,1130 670,1132 715,1152 740,1152|0,1275 460,1287 540,1252 730,1203|730,1277 1215,1277|1225,1192 1530,1192|1225,1363 1568,1363|710,1370 700,1547|130,1533 455,1540|830,1540 1215,1540|1225,1520 1568,1520|600,1547 615,1510",
    major:
      "395,0 395,45 460,130 690,345 797,345 797,498|0,494 20,496|245,497 515,497|600,497 825,500 1090,820 1220,822 1430,825 1568,850|1370,0 1370,140 1325,210 1290,370 1260,385|1568,370 1555,390 1552,525 1440,660 1345,760 1285,820|1210,875 800,1105 750,1150 715,1355 570,1547|1225,870 1475,1305 1490,1390 1540,1500 1568,1535|118,0 125,270|127,355 118,1547|1233,480 1222,820 1215,870 1217,1547",
    highway: "1568,1130 1375,1547",
  },
  I: {
    urban:
      "915,480 1430,470 1530,540 1530,1150 1390,1160 1210,1140 1180,980 1240,900 1160,850 1025,840 915,840|915,1085 1100,1130 1110,1200 920,1200|1130,0 1410,0 1405,80 1140,80",
    park: "38,0 70,0 70,50 38,65|1090,300 1120,258 1150,262 1245,370 1230,410 1160,408 1150,385 1110,360 1125,330 1095,325|1440,0 1530,0 1530,235 1455,235 1455,120 1440,90|1520,240 1530,240 1530,560 1520,560|1310,755 1345,752 1345,840 1308,842|1265,893 1305,895 1310,925 1330,930 1325,950 1290,955 1270,960 1250,960 1180,945 1180,935 1260,938|533,1072 565,1072 562,1180 520,1180 518,1125 530,1115|585,1120 640,1145 640,1185 625,1190 655,1272 590,1265|0,470 15,470 15,510 0,530|0,890 25,893 25,915 0,915|1262,370 1300,363 1298,372 1265,378",
    forest: "580,0 955,0 940,60 880,55 880,95 860,80 830,45 790,90 770,90 765,0 740,70 700,95 650,95 630,55 580,50",
    water:
      "860,648 878,655 870,685 860,675|1125,755 1165,775 1160,795 1125,780|1170,425 1188,425 1185,445|1130,330 1148,355 1135,358|1125,1487 1150,1490 1190,1547 1170,1547 1145,1500|1108,1443 1122,1455 1122,1475|1308,1212 1332,1212 1330,1223 1308,1223|75,1290 92,1300 85,1315|695,352 705,355 700,378|630,1150 650,1170 635,1180|1385,790 1398,795 1388,820|1228,600 1244,600 1238,612|1270,605 1280,590 1276,608|73,935 82,937 80,957|75,1235 83,1237 80,1255|188,1175 203,1190 196,1192|930,675 945,665 940,685|963,1405 972,1408 968,1418|262,240 272,245 266,252|347,298 356,300 352,308",
    streets:
      "230,0 232,100 210,180|80,0 80,205|0,145 100,275|0,212 160,212|0,292 235,290 255,262 370,258 515,255|370,262 365,475|185,215 165,300 165,320 200,385 205,480 215,620|0,665 115,665 120,632 1220,632|120,632 120,835|210,480 525,480|435,485 432,1547|305,632 295,1547|237,640 235,1060 905,1062|520,97 1530,95|540,252 910,255 960,120 965,95|765,0 750,150 745,270 710,460 775,530 775,680 715,835 710,1270 690,1340 680,1400 645,1547|912,255 910,1547|1085,0 1085,95|1053,98 1050,595 1065,660 1065,690 1025,745 1025,840|1245,0 1245,100 1255,160 1250,600 1250,880 1275,920 1265,1000 1205,1130 1205,1450 1240,1547|1405,0 1405,90|1055,247 1400,248 1490,250 1530,235|1420,255 1420,320 1440,385 1450,470|1255,397 1445,397|915,478 1450,467 1530,467|1450,470 1475,510 1480,550 1430,625 1340,605 1255,605 1150,565 1145,600 1115,630 1115,830|1480,555 1530,575|1305,690 1400,790 1405,880 1450,895 1530,870|1390,745 1475,740 1480,700 1530,698|1115,830 1135,830 1145,800 1195,800|1165,780 1250,780|1340,852 1480,850 1530,815|915,1085 960,1090 1000,1103 1070,1103 1105,1130 1205,1133|1045,860 1040,1270|1205,1147 1375,1145 1415,1110|1375,1145 1375,1547|1440,1100 1530,1100|1485,1100 1485,1390|0,1193 195,1193 235,1275 590,1273 690,1335 780,1353 910,1342 1040,1272 1075,1270|1155,1272 1295,1272 1440,1390 1480,1388 1530,1435|100,1463 190,1463 235,1480 1215,1478|45,870 40,1090 100,1250 100,1547|50,1025 230,1025|0,920 40,910 98,913 98,870|0,1363 95,1365|300,95 415,0|1250,690 1165,790",
    major:
      "512,0 512,110 530,230 530,505 572,585 575,1547|505,100 300,100 190,195 35,380 28,520 0,560|0,850 1325,852 1440,935 1530,1010|1135,1020 1120,1240|0,1490 45,1547",
    highway:
      "175,0 190,190 230,490 225,620 155,900 85,1060 0,1240|1005,40 940,95 880,140 800,165 580,185 520,210 480,240 440,285|408,375 375,490 325,550 250,560|1328,20 1328,620 1300,685 1180,800 1160,840 1145,1000 1175,1040 1350,1040 1410,1080 1450,1130 1530,1195|1105,1325 1055,1547",
  },
};

const thickets: [SheetId, string][] = [
  [
    "F",
    "1350,320 1385,310|1355,290 1375,300|1395,300 1410,320|1430,240 1445,255|1465,270 1480,262|1425,360 1450,375|1460,340 1485,345|1435,400 1460,385|1470,370 1490,390|1420,430 1440,425|1450,420 1465,440|1480,300 1500,330|1505,290 1525,305|1430,470 1425,500|1445,465 1455,495|1500,470 1515,460|1435,525 1455,515|1495,360 1515,350|1400,270 1415,285|1225,830 1240,840|1230,870 1245,885|1240,910 1250,935|1500,1560 1520,1530",
  ],
  ["I", "1485,85 1500,70|1500,110 1515,95|1520,60 1530,50|1495,150 1505,190|1515,140 1525,170|1510,20 1525,30"],
];

const places: [string, SheetId, number, number, boolean?][] = [
  ["Lorain", "A", 556, 278, true],
  ["Avon", "A", 1568, 288],
  ["Amherst", "A", 278, 902],
  ["h Amherst", "A", 129, 1385],
  ["Elyria", "A", 1068, 1243, true],
  ["Westlake", "B", 842, 247],
  ["North Olmsted", "B", 805, 700],
  ["North", "B", 150, 955],
  ["Ridgeville", "B", 148, 1042],
  ["Middleburg", "B", 1565, 1275],
  ["Heights", "B", 1562, 1362],
  ["Brooklyn", "C", 455, 528],
  ["Parma", "C", 652, 822, true],
  ["Independence", "C", 1234, 1232],
  ["Oberlin", "D", 313, 575],
  ["Grafton", "D", 1435, 818],
  ["Pittsfield", "D", 305, 1222],
  ["Lagrange", "D", 984, 1225],
  ["Strongsville", "E", 1407, 338],
  ["Valley City", "E", 752, 1218],
  ["Brunswick", "E", 1371, 1212],
  ["Brecksville", "F", 1315, 270],
  ["Richfield", "F", 1240, 1185],
  ["Wellington", "G", 305, 487],
  ["Penfield", "G", 973, 491],
  ["Huntington", "G", 288, 1240],
  ["Spencer", "G", 963, 1270],
  ["Litchfield", "H", 125, 497],
  ["Abbeyville", "H", 1056, 162],
  ["Medina", "H", 1278, 780],
  ["Bath", "I", 1253, 248],
  ["Montrose-Ghent", "I", 1143, 652],
  ["Fairlawn", "I", 1440, 943],
];

const routes: [string, ShieldKind, SheetId, number, number][] = [
  ["90", "interstate", "A", 1253, 458],
  ["80", "interstate", "A", 862, 985],
  ["480", "interstate", "B", 729, 892],
  ["80", "interstate", "B", 477, 1228],
  ["71", "interstate", "B", 1529, 765],
  ["90", "interstate", "C", 616, 35],
  ["", "interstate", "C", 970, -14],
  ["77", "interstate", "C", 1100, 232],
  ["480", "interstate", "C", 1205, 788],
  ["77", "interstate", "F", 1159, 65],
  ["80", "interstate", "F", 235, 242],
  ["71", "interstate", "F", 93, 908],
  ["80", "interstate", "F", 1505, 982],
  ["271", "interstate", "F", 1044, 1525],
  ["77", "interstate", "F", 1326, 1495],
  ["271", "interstate", "I", 423, 330],
  ["10", "state", "B", 142, 1388],
  ["176", "state", "C", 926, 470],
  ["301", "state", "D", 1197, 212],
  ["57", "state", "D", 1329, 426],
  ["303", "state", "D", 610, 1213],
  ["511", "state", "D", -22, 592],
  ["57", "state", "E", 397, 1452],
  ["94", "state", "F", 506, 1410],
  ["83", "state", "H", 127, 312],
  ["18", "state", "H", 558, 502],
  ["21", "state", "I", 1112, 1285],
  ["20", "us", "D", 757, 477],
  ["", "us", "D", -36, 920],
  ["42", "us", "H", 1248, 430],
];

const calls = [
  { address: "123 Main Street", place: "first" as const, pin: ["A", 1014, 1676] as const },
  { address: "237 Oak Road", place: "middle" as const, pin: ["B", 1203, 1433] as const },
  { address: "5472 Market Ave", place: "last" as const, pin: ["I", 936, 1064] as const },
];

const spot = (id: SheetId, x: number, y: number): React.CSSProperties => {
  const [px, py] = project(id, x, y);
  return { left: `${(px / MAP_W) * 100}%`, top: `${(py / MAP_H) * 100}%` };
};

const layer = (key: keyof Sheet, close: boolean) =>
  SHEET_IDS.map((id) => (sheets[id][key] ? toPath(id, sheets[id][key] as string, close) : "")).join("");

const ShieldShape = ({ kind, wide }: { kind: ShieldKind; wide: boolean }) => {
  if (kind === "interstate") {
    const w = wide ? 53 : 38;
    const m = w / 2;
    return (
      <svg viewBox={`0 0 ${w} 38`} aria-hidden="true">
        <path d={`M1 1L${m * 0.35} 2.5L${m * 0.6} 0.5L${m} 2.5L${m * 1.4} 0.5L${m * 1.65} 2.5L${w - 1} 1V9H1Z`} fill="#d6505c" />
        <path d={`M0 7H${w}V17C${w} 27 ${m + 9} 36 ${m} 38C${m - 9} 36 0 27 0 17Z`} fill="#fff" />
        <path d={`M0 9H${w}V17C${w} 27 ${m + 9} 36 ${m} 38C${m - 9} 36 0 27 0 17Z`} fill="#1f63a8" />
      </svg>
    );
  }
  if (kind === "us") {
    return (
      <svg viewBox="0 0 42 38" aria-hidden="true">
        <path
          d="M7 2Q10 4 14 3Q18 4 21 1.500Q24 4 28 3Q32 4 35 2L39 7Q37 11 39 15Q42 22 40 29Q38 35 31 35Q24 34 21 37Q18 34 11 35Q4 35 2 29Q0 22 3 15Q5 11 3 7Z"
          fill="#fff"
          stroke="#4b4b52"
          strokeWidth="2"
        />
      </svg>
    );
  }
  const w = wide ? 47 : 38;
  return (
    <svg viewBox={`0 0 ${w} 34`} aria-hidden="true">
      <rect x="1" y="1" width={w - 2} height="32" rx="14" fill="#fff" stroke="#4b4b52" strokeWidth="2" />
    </svg>
  );
};

const ServiceMap = () => {
  const major = layer("major", false);
  const highway = layer("highway", false);
  return (
    <MapFrame aria-label="Service call map">
      <MapDrawing viewBox={`0 0 ${MAP_W} ${MAP_H}`} preserveAspectRatio="none" aria-hidden="true">
        <path d={layer("urban", true)} fill={colors.urban} />
        <path d={layer("field", true)} fill={colors.land} />
        <path d={layer("town", true)} fill={colors.urban} />
        <path d={layer("park", true)} fill={colors.park} />
        <path d={layer("forest", true)} fill={colors.forest} />
        <path d={layer("meadow", true)} fill={colors.meadow} />
        <path d={layer("water", true)} fill={colors.water} />
        <g fill="none" strokeLinejoin="round">
          <path d={thickets.map(([id, d]) => toPath(id, d)).join("")} stroke="#84bd82" strokeWidth="3" />
          <path d={layer("streets", false)} stroke="#fff" strokeWidth="4" strokeLinecap="round" />
          <path d={major} stroke={colors.roadEdge} strokeWidth="9" />
          <path d={highway} stroke={colors.roadEdge} strokeWidth="12" strokeLinecap="round" />
          <path d={major} stroke={colors.road} strokeWidth="5" />
          <path d={highway} stroke={colors.road} strokeWidth="7" strokeLinecap="round" />
        </g>
      </MapDrawing>
      {places.map(([name, id, x, y, large]) => (
        <PlaceName key={name} $large={large} style={spot(id, x, y)}>
          {name}
        </PlaceName>
      ))}
      {routes.map(([num, kind, id, x, y]) => {
        const wide = num.length > 2;
        return (
          <Shield key={id + x} $kind={kind} $wide={wide} style={spot(id, x, y)}>
            <ShieldShape kind={kind} wide={wide} />
            <span>{num}</span>
          </Shield>
        );
      })}
      {calls.map(({ address, pin }) => (
        <Pin key={address} aria-label={address} style={spot(pin[0], pin[1], pin[2])}>
          <svg viewBox="0 0 76 124" aria-hidden="true">
            <path d="M38 0C17 0 0 17 0 38C0 51 7 60 14 71C25 88 34 104 38 124C42 104 51 88 62 71C69 60 76 51 76 38C76 17 59 0 38 0Z" fill="#eb252b" />
            <circle cx="38" cy="37" r="13.500" fill="#25252d" />
          </svg>
        </Pin>
      ))}
    </MapFrame>
  );
};

const SignalIcon = () => (
  <svg width="90" height="56" viewBox="0 0 90 56" fill="#fff" aria-hidden="true">
    <rect x="0" y="32" width="16" height="24" rx="5" />
    <rect x="24" y="22" width="17" height="34" rx="5" />
    <rect x="49" y="11" width="16" height="45" rx="5" />
    <rect x="73" y="0" width="17" height="56" rx="5" opacity=".3" />
  </svg>
);

const WifiIcon = () => (
  <svg width="79" height="57" viewBox="0 0 79 57" fill="none" stroke="#fff" strokeWidth="12" aria-hidden="true">
    <path d="M4 20.300A51 51 0 0 1 75 20.300" opacity=".3" />
    <path d="M17.600 34.400A31.500 31.500 0 0 1 61.400 34.400" />
    <path d="M39.500 57L27 44A18 18 0 0 1 52 44Z" fill="#fff" stroke="none" />
  </svg>
);

const RotationLockIcon = () => (
  <svg width="63" height="57" viewBox="0 0 63 57" fill="none" stroke="#fff" aria-hidden="true">
    <path d="M53.600 26A25.500 25.500 0 1 0 49 43" strokeWidth="4.500" />
    <path d="M45 26H63L54 38Z" fill="#fff" stroke="none" />
    <rect x="17.500" y="27" width="21" height="17" rx="2" fill="#fff" stroke="none" />
    <path d="M21.500 28V20a6.500 6.500 0 0 1 13 0V28" strokeWidth="3.500" />
  </svg>
);

const AlarmIcon = () => (
  <svg width="54" height="52" viewBox="0 0 54 52" fill="#fff" aria-hidden="true">
    <circle cx="27" cy="28" r="24" />
    <path d="M0 11Q1 1 12 0Q5 4 0 11ZM54 11Q53 1 42 0Q49 4 54 11Z" stroke="#fff" strokeWidth="2" />
    <path d="M28 12V31H15" fill="none" stroke={colors.brand} strokeWidth="4" />
  </svg>
);

const BoltIcon = () => (
  <svg width="34" height="62" viewBox="0 0 34 62" fill="#fff" aria-hidden="true">
    <path d="M25 0L0 35H14L8 62L34 25H19Z" />
  </svg>
);

export default function App() {
  return (
    <Page>
      <GlobalStyle />
      <Header>
        <StatusBar>
          <StatusGroup $gap={18}>
            <SignalIcon />
            <Carrier>AT&amp;T</Carrier>
            <WifiIcon />
          </StatusGroup>
          <Clock>3:24 PM</Clock>
          <StatusGroup $end $gap={37}>
            <RotationLockIcon />
            <AlarmIcon />
            <PowerGroup>
              <span>37%</span>
              <BatteryRow>
                <BatteryShell>
                  <BatteryCharge />
                </BatteryShell>
              </BatteryRow>
              <BoltIcon />
            </PowerGroup>
          </StatusGroup>
        </StatusBar>
        <NavBar>
          <BackButton aria-label="Back">
            <svg width="60" height="98" viewBox="0 0 60 98" aria-hidden="true">
              <path d="M52 5L9 49L52 93" fill="none" stroke="#fff" strokeWidth="14" />
            </svg>
          </BackButton>
          <Title>Service Dispatch</Title>
          <NavActions>
            <ImageButton aria-label="Photos">
              <MdImage />
            </ImageButton>
            <CountButton>0</CountButton>
          </NavActions>
        </NavBar>
      </Header>
      <Main>
        <SectionTitle>Open Service Calls</SectionTitle>
        <CallList>
          {calls.map((c) => (
            <CallRow key={c.address} $place={c.place}>
              {c.address}
            </CallRow>
          ))}
        </CallList>
        <ServiceMap />
      </Main>
    </Page>
  );
}
